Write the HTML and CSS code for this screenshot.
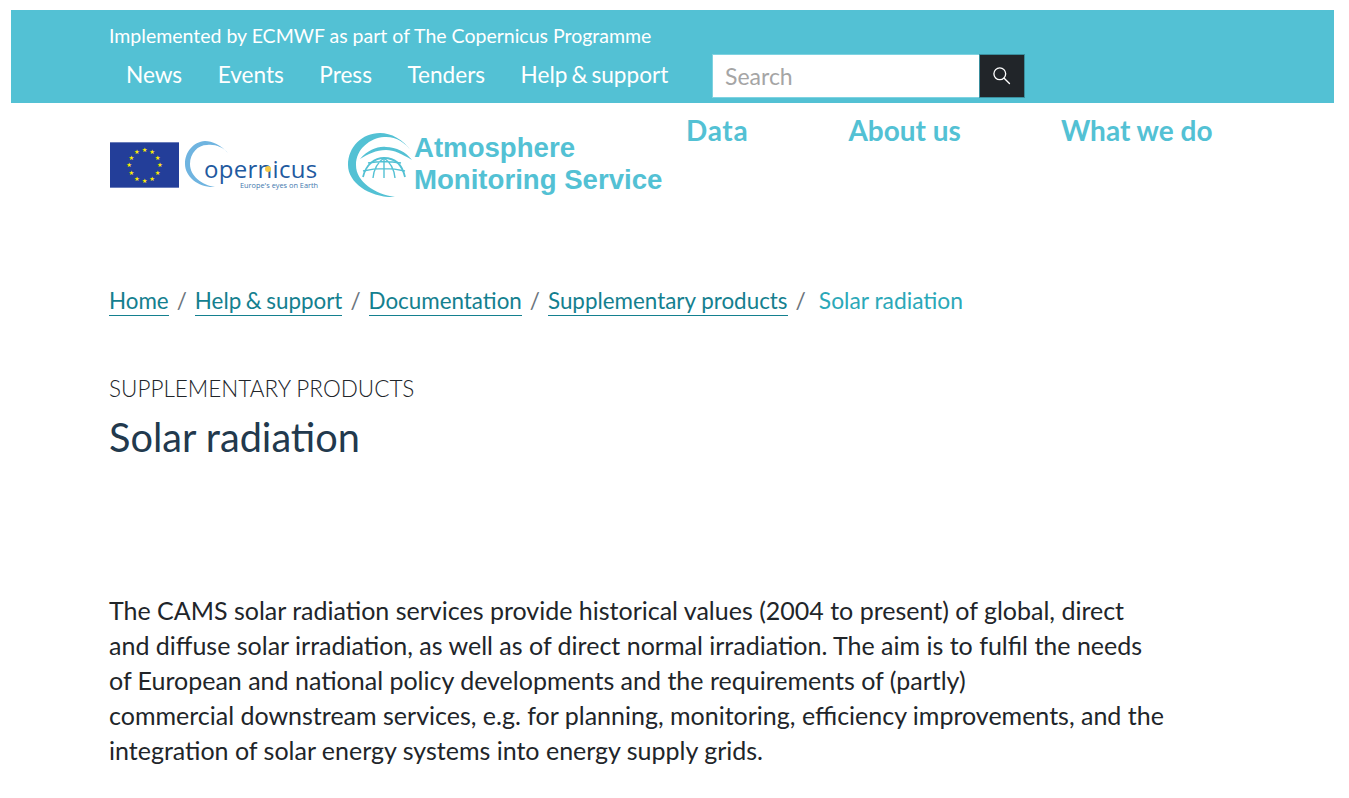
FILE: index.html
```html
<!DOCTYPE html>
<html lang="en">
<head>
    <meta charset="UTF-8">
    <meta name="viewport" content="width=device-width, initial-scale=1.0">
    <title>Solar radiation</title>
    <link rel="stylesheet" href="styles.css">
</head>
<body>
    <header class="top-bar">
        <p class="implemented">Implemented by ECMWF as part of The Copernicus Programme</p>
        <div class="top-row">
            <nav class="top-nav">
                <a href="#">News</a>
                <a href="#">Events</a>
                <a href="#">Press</a>
                <a href="#">Tenders</a>
                <a href="#">Help &amp; support</a>
            </nav>
            <form class="search">
                <input type="text" placeholder="Search">
                <button type="button" aria-label="Search">
                    <svg width="19" height="19" viewBox="0 0 20 20" fill="none" stroke="#fff" stroke-width="1.4">
                        <circle cx="8.2" cy="8.2" r="6.2"/>
                        <path d="M12.8 12.8 L18.4 18.4" stroke-linecap="round"/>
                    </svg>
                </button>
            </form>
        </div>
    </header>

    <div class="logo-row">
        <div class="logos">
            <svg class="eu-flag" width="69" height="46" viewBox="0 0 70 46">
                <rect width="70" height="46" fill="#233e99"/>
                <g fill="#ffed00" font-size="6.5" text-anchor="middle" font-family="'DejaVu Sans', sans-serif">
                    <text x="35" y="10">★</text>
                    <text x="42.8" y="12.1">★</text>
                    <text x="48.4" y="17.8">★</text>
                    <text x="50.5" y="25.5">★</text>
                    <text x="48.4" y="33.3">★</text>
                    <text x="42.8" y="38.9">★</text>
                    <text x="35" y="41">★</text>
                    <text x="27.2" y="38.9">★</text>
                    <text x="21.6" y="33.3">★</text>
                    <text x="19.5" y="25.5">★</text>
                    <text x="21.6" y="17.8">★</text>
                    <text x="27.2" y="12.1">★</text>
                </g>
            </svg>
            <svg class="copernicus" width="134" height="52" viewBox="0 0 134 52">
                <path d="M43 13 C36 5 27 1 20 1 C8 2 0 12 0 24 C0 37 14 48 30 47 C17 45 5 36 5 24 C5 13 13 5 22 5 C30 4 38 7 43 13 Z" fill="#6fb4e0"/>
                <text x="19" y="37.5" font-family="'Open Sans', sans-serif" font-size="24" letter-spacing="0.3" fill="#1f5aa0">opernicus</text>
                <circle cx="83" cy="29" r="3" fill="#f6c945"/>
                <text x="55" y="48" font-family="'Open Sans', sans-serif" font-size="7.35" fill="#3f78ae">Europe's eyes on Earth</text>
            </svg>
            <div class="cams">
                <svg width="66" height="68" viewBox="0 0 66 68" fill="none" stroke="#53c1d4">
                    <path d="M64 20 C55 7 43 1 32 1 C14 1 0 15 0 33 C0 51 22 66 47 65 C27 62 8 50 8 33 C8 17 22 6 36 5 C47 4 57 10 64 20 Z" fill="#53c1d4" stroke="none"/>
                    <path d="M12 27 C20 18 30 14 38 15 C48 15 58 20 64 28 C54 22 46 18 38 18 C28 18 20 22 12 27 Z" fill="#53c1d4" stroke="none"/>
                    <path d="M15 45 C18 32 27 26 36 26 C46 26 54 32 57 45" stroke-width="1.8"/>
                    <path d="M25 46 C26 36 30 30 36 26 C42 30 46 36 47 46 M36 26 V46 M20 31 C30 29 42 29 53 31 M15 39 C28 36 44 36 57 39" stroke-width="1.4"/>
                </svg>
                <p class="cams-name">Atmosphere<br>Monitoring Service</p>
            </div>
        </div>
        <nav class="main-nav">
            <a href="#">Data</a>
            <a href="#">About us</a>
            <a href="#">What we do</a>
        </nav>
    </div>

    <main class="content">
        <ul class="breadcrumb">
            <li><a href="#">Home</a></li>
            <li><a class="tight" href="#">Help &amp; support</a></li>
            <li><a href="#">Documentation</a></li>
            <li><a href="#">Supplementary products</a></li>
            <li class="current">Solar radiation</li>
        </ul>

        <p class="kicker">SUPPLEMENTARY PRODUCTS</p>
        <h1>Solar radiation</h1>

        <p class="intro">The CAMS solar radiation services provide historical values (2004 to present) of global, direct<br>
        and diffuse solar irradiation, as well as of direct normal irradiation. The aim is to fulfil the needs<br>
        of European and national policy developments and the requirements of (partly)<br>
        commercial downstream services, e.g. for planning, monitoring, efficiency improvements, and the<br>
        integration of solar energy systems into energy supply grids.</p>
    </main>
</body>
</html>
```

FILE: styles.css
```css
body {
    margin: 0;
    padding: 10px 15px 0 11px;
    font-family: Lato, sans-serif;
    color: #212529;
    background: #fff;
}
p {
    margin: 0;
}
a {
    text-decoration: none;
}

.top-bar {
    height: 93px;
    padding: 14px 0 0 98px;
    box-sizing: border-box;
    background: #53c1d4;
    color: #fff;
}
.implemented {
    font-size: 19.5px;
    line-height: 24px;
}
.top-row {
    display: flex;
    align-items: flex-start;
    margin-top: 6px;
}
.top-nav {
    display: flex;
    gap: 35.5px;
    padding: 6px 0 0 17px;
    width: 586px;
    box-sizing: border-box;
}
.top-nav a {
    color: #fff;
    font-size: 22.6px;
    line-height: 30px;
    word-spacing: -1.8px;
}
.search {
    display: flex;
    margin: 0 0 0 17px;
}
.search input {
    width: 267px;
    height: 44px;
    padding: 0 12px;
    box-sizing: border-box;
    border: 1px solid #7fd3e1;
    border-right: none;
    font-family: Lato, sans-serif;
    font-size: 23px;
    outline: none;
}
.search input::placeholder {
    color: #a5a5a5;
    opacity: 1;
}
.search button {
    width: 46px;
    height: 44px;
    padding: 0 2px 2px 0;
    background: #212529;
    border: 1px solid #3a8f9e;
    display: flex;
    align-items: center;
    justify-content: center;
}

.logo-row {
    display: flex;
    justify-content: space-between;
    height: 182px;
    padding: 0 0 0 99px;
}
.logos {
    display: flex;
    align-items: flex-start;
    flex: none;
    width: 576px;
    padding-top: 28px;
    box-sizing: border-box;
}
.eu-flag {
    margin-top: 11px;
}
.copernicus {
    margin: 9px 0 0 6px;
}
.cams {
    display: flex;
    margin: 1px 0 0 29px;
}
.cams-name {
    font-family: "Liberation Sans", Arial, sans-serif;
    font-weight: bold;
    font-size: 27.6px;
    line-height: 32px;
    color: #53c1d4;
    white-space: nowrap;
}
.main-nav {
    display: flex;
    gap: 100px;
    padding: 9px 122px 0 0;
    height: 36px;
}
.main-nav a {
    color: #53c1d4;
    font-size: 28px;
    line-height: 36px;
    font-weight: bold;
    white-space: nowrap;
}
.main-nav a:first-child {
    letter-spacing: 0.7px;
}

.content {
    padding-left: 98px;
}
.breadcrumb {
    display: flex;
    align-items: baseline;
    margin: 0;
    padding: 0;
    list-style: none;
    font-size: 22.4px;
    line-height: 30px;
}
.breadcrumb li + li::before {
    content: "/";
    color: #6c757d;
    padding: 0 8px;
}
.breadcrumb a {
    color: #14808f;
    padding-bottom: 1px;
    border-bottom: 1px solid #14808f;
}
.breadcrumb a.tight {
    word-spacing: -1.2px;
}
.breadcrumb .current {
    color: #2ba8b8;
    font-size: 22.8px;
}
.breadcrumb .current::before {
    padding-right: 13px;
}
.kicker {
    margin-top: 58px;
    font-size: 22.5px;
    font-weight: 300;
    line-height: 30px;
    color: #212529;
}
h1 {
    margin: 9px 0 0;
    font-size: 39.7px;
    line-height: 48px;
    font-weight: 400;
    color: #22394d;
}
.intro {
    margin-top: 132px;
    font-size: 25px;
    line-height: 35px;
    white-space: nowrap;
}
```
